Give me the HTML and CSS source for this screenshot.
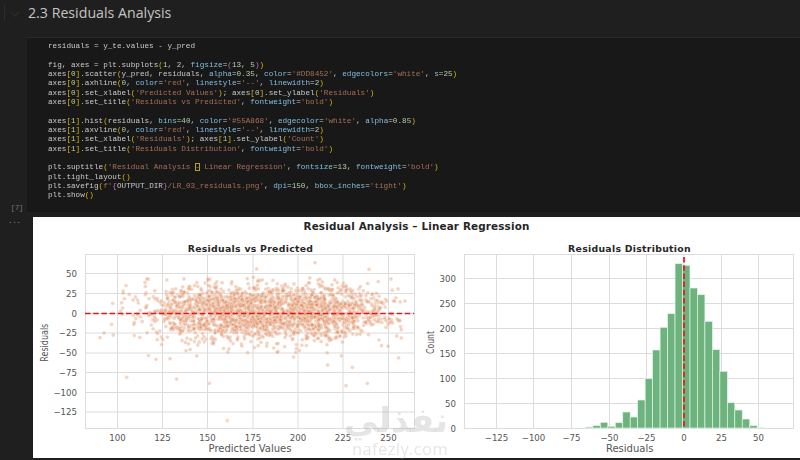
FILE: index.html
```html
<!DOCTYPE html>
<html lang="en">

<head>
    <meta charset="UTF-8">
    <meta name="viewport" content="width=device-width, initial-scale=1.0">
    <title>Residuals Analysis</title>
    <link rel="stylesheet" href="styles.css">
</head>

<body>

    <header class="section-head">
        <span class="fold-bar"></span>
        <svg class="chevron" viewBox="0 0 10 6" width="10" height="6"><path d="M1 1l4 4 4-4"></path></svg>
        <h2>2.3 Residuals Analysis</h2>
    </header>

    <div class="cell">
        <div class="gutter"><span>[7]</span></div>
        <pre class="code">residuals = y_te.values - y_pred

fig, axes = plt.subplots<b>(</b><i>1</i>, <i>2</i>, <u>figsize</u>=<em>(</em><i>13</i>, <i>5</i><em>)</em><b>)</b>
axes<b>[</b><i>0</i><b>]</b>.scatter<b>(</b>y_pred, residuals, <u>alpha</u>=<i>0.35</i>, <u>color</u>=<s>'#DD8452'</s>, <u>edgecolors</u>=<s>'white'</s>, <u>s</u>=<i>25</i><b>)</b>
axes<b>[</b><i>0</i><b>]</b>.axhline<b>(</b><i>0</i>, <u>color</u>=<s>'red'</s>, <u>linestyle</u>=<s>'--'</s>, <u>linewidth</u>=<i>2</i><b>)</b>
axes<b>[</b><i>0</i><b>]</b>.set_xlabel<b>(</b><s>'Predicted Values'</s><b>)</b>; axes<b>[</b><i>0</i><b>]</b>.set_ylabel<b>(</b><s>'Residuals'</s><b>)</b>
axes<b>[</b><i>0</i><b>]</b>.set_title<b>(</b><s>'Residuals vs Predicted'</s>, <u>fontweight</u>=<s>'bold'</s><b>)</b>

axes<b>[</b><i>1</i><b>]</b>.hist<b>(</b>residuals, <u>bins</u>=<i>40</i>, <u>color</u>=<s>'#55A868'</s>, <u>edgecolor</u>=<s>'white'</s>, <u>alpha</u>=<i>0.85</i><b>)</b>
axes<b>[</b><i>1</i><b>]</b>.axvline<b>(</b><i>0</i>, <u>color</u>=<s>'red'</s>, <u>linestyle</u>=<s>'--'</s>, <u>linewidth</u>=<i>2</i><b>)</b>
axes<b>[</b><i>1</i><b>]</b>.set_xlabel<b>(</b><s>'Residuals'</s><b>)</b>; axes<b>[</b><i>1</i><b>]</b>.set_ylabel<b>(</b><s>'Count'</s><b>)</b>
axes<b>[</b><i>1</i><b>]</b>.set_title<b>(</b><s>'Residuals Distribution'</s>, <u>fontweight</u>=<s>'bold'</s><b>)</b>

plt.suptitle<b>(</b><s>'Residual Analysis <mark>–</mark> Linear Regression'</s>, <u>fontsize</u>=<i>13</i>, <u>fontweight</u>=<s>'bold'</s><b>)</b>
plt.tight_layout<b>()</b>
plt.savefig<b>(</b><s>f'</s><em>{</em>OUTPUT_DIR<em>}</em><s>/LR_03_residuals.png'</s>, <u>dpi</u>=<i>150</i>, <u>bbox_inches</u>=<s>'tight'</s><b>)</b>
plt.show<b>()</b></pre>
    </div>

    <div class="output">
        <div class="gutter"><span>...</span></div>
        <div class="figure">
            <h3 class="suptitle">Residual Analysis – Linear Regression</h3>
            <div class="plots">
                <!-- viewBox values are page coordinates, easier to read off the plot -->
                <svg class="plot plot-left" viewBox="33 235 392 223" width="392" height="223">
                    <text class="plot-title" x="250.5" y="251.5">Residuals vs Predicted</text>
                    <g class="grid">
                        <path d="M117.5 254V428M162.5 254V428M207.5 254V428M253 254V428M298 254V428M343 254V428M388.5 254V428"></path>
                        <path d="M85 273.5H414M85 293.5H414M85 313.5H414M85 333H414M85 353H414M85 372.5H414M85 392.5H414M85 412H414"></path>
                        <rect x="85.5" y="254.5" width="329" height="174"></rect>
                    </g>
                    <g id="dots"></g>
                    <path class="zero" d="M85 313.5H414"></path>
                    <g class="ytick">
                        <text x="77" y="276.5">50</text>
                        <text x="77" y="296.5">25</text>
                        <text x="77" y="316.5">0</text>
                        <text x="77" y="336">−25</text>
                        <text x="77" y="356">−50</text>
                        <text x="77" y="375.5">−75</text>
                        <text x="77" y="395.5">−100</text>
                        <text x="77" y="415">−125</text>
                    </g>
                    <g class="xtick">
                        <text x="117.5" y="441">100</text>
                        <text x="162.5" y="441">125</text>
                        <text x="207.5" y="441">150</text>
                        <text x="253" y="441">175</text>
                        <text x="298" y="441">200</text>
                        <text x="343" y="441">225</text>
                        <text x="388.5" y="441">250</text>
                    </g>
                    <text class="xlabel" x="250" y="451.5">Predicted Values</text>
                    <text class="ylabel" transform="translate(47.5 361.7) rotate(-90)" textLength="38" lengthAdjust="spacingAndGlyphs">Residuals</text>
                </svg>
                <svg class="plot plot-right" viewBox="425 235 375 223" width="375" height="223">
                    <text class="plot-title" x="629.5" y="251.5">Residuals Distribution</text>
                    <g class="grid">
                        <path d="M496.5 254V428M533.5 254V428M571.5 254V428M609.5 254V428M646.5 254V428M684 254V428M721.5 254V428M758.5 254V428"></path>
                        <path d="M464 278.5H794M464 303.5H794M464 328.5H794M464 353.5H794M464 378.5H794M464 403.5H794"></path>
                        <rect x="464.5" y="254.5" width="329" height="174"></rect>
                    </g>
                    <g id="bars"></g>
                    <path class="zero" d="M684 257V428"></path>
                    <g class="ytick">
                        <text x="456" y="281.5">300</text>
                        <text x="456" y="306.5">250</text>
                        <text x="456" y="331.5">200</text>
                        <text x="456" y="356.5">150</text>
                        <text x="456" y="381.5">100</text>
                        <text x="456" y="406.5">50</text>
                        <text x="456" y="431.5">0</text>
                    </g>
                    <g class="xtick">
                        <text x="496.5" y="441">−125</text>
                        <text x="533.5" y="441">−100</text>
                        <text x="571.5" y="441">−75</text>
                        <text x="609.5" y="441">−50</text>
                        <text x="646.5" y="441">−25</text>
                        <text x="684" y="441">0</text>
                        <text x="721.5" y="441">25</text>
                        <text x="758.5" y="441">50</text>
                    </g>
                    <text class="xlabel" x="629.7" y="451.5">Residuals</text>
                    <text class="ylabel" transform="translate(433.5 354) rotate(-90)" textLength="23" lengthAdjust="spacingAndGlyphs">Count</text>
                </svg>
            </div>
            <div class="watermark">
                <span class="wm-ar" lang="ar" dir="rtl">نفذلي</span>
                <span class="wm-en">nafezly.com</span>
            </div>
        </div>
    </div>

    <script src="plots.js"></script>
</body>

</html>
```

FILE: styles.css
```css
body {
    margin: 0;
    width: 800px;
    height: 460px;
    overflow: hidden;
    background-color: #1f1f1f;
    font-family: "Open Sans", sans-serif;
}

.section-head {
    height: 37px;
    display: flex;
    align-items: flex-start;
    box-sizing: border-box;
    padding: 3px 0 0 4px;
}

.section-head h2 {
    margin: 0;
    font-size: 14.2px;
    line-height: 19px;
    font-weight: 400;
    color: #c4c4c4;
}

.fold-bar {
    width: 1px;
    height: 16px;
    margin-top: 2px;
    background-color: #2c2c2c;
}

.chevron {
    margin: 8px 8px 0 5px;
    fill: none;
    stroke: #2b2b2b;
    stroke-width: 1.5;
}

.cell {
    height: 175px;
    display: flex;
}

.gutter {
    width: 27px;
    flex: none;
    display: flex;
    justify-content: center;
    color: #7a7a7a;
    font-size: 7px;
    font-family: "Liberation Mono", monospace;
}

.cell .gutter {
    align-items: flex-end;
    padding: 0 0 0 7px;
    box-sizing: border-box;
}

.code {
    flex: 1;
    margin: 0;
    padding: 4px 0 0 21px;
    border-top: 1px solid #2a2a2a;
    background-color: #181818;
    color: #cacaca;
    font-family: "Liberation Mono", monospace;
    font-size: 7.67px;
    line-height: 9.33px;
    filter: blur(0.3px);
}

.code b {
    color: #d9b400;
    font-weight: 400;
}

.code em {
    color: #c26cc2;
    font-style: normal;
}

.code i {
    color: #b5cea8;
    font-style: normal;
}

.code u {
    color: #85bfe0;
    text-decoration: none;
}

.code s {
    color: #a96f57;
    text-decoration: none;
}

.code mark {
    background: none;
    color: inherit;
    outline: 1px solid #b9a020;
    outline-offset: -1px;
}

.output {
    margin-top: 5px;
    display: flex;
}

.output .gutter {
    width: 33px;
    padding: 0 4px 0 0;
    box-sizing: border-box;
    font-weight: 700;
}

.figure {
    position: relative;
    flex: 1;
    height: 241px;
    background-color: #fff;
    filter: blur(0.3px);
}

.suptitle {
    margin: 0;
    height: 18px;
    font-family: "DejaVu Sans", sans-serif;
    font-size: 10.4px;
    line-height: 18px;
    letter-spacing: 0.15px;
    font-weight: 700;
    text-align: center;
    color: #262626;
}

.plots {
    display: flex;
}

.plot {
    display: block;
    font-family: "DejaVu Sans", sans-serif;
}

.plot-title {
    font-size: 9.3px;
    font-weight: 700;
    letter-spacing: 0.3px;
    text-anchor: middle;
    fill: #262626;
}

.grid path,
.grid rect {
    fill: none;
    stroke: #dcdcdc;
    stroke-width: 1;
}

.zero {
    fill: none;
    stroke: #e8141c;
    stroke-width: 1.7;
    stroke-dasharray: 5.5 2.7;
}

.ytick text {
    font-size: 8.6px;
    text-anchor: end;
    fill: #555;
}

.xtick text {
    font-size: 8.6px;
    text-anchor: middle;
    fill: #555;
}

.xlabel {
    font-size: 10px;
    text-anchor: middle;
    fill: #555;
}

.ylabel {
    font-size: 10px;
    fill: #555;
}

.dot {
    fill: #dd8452;
    fill-opacity: 0.35;
    stroke: #fff;
    stroke-opacity: 0.45;
    stroke-width: 0.5;
}

.bar {
    fill: #6cb37e;
    stroke: #e6f2e9;
    stroke-width: 0.7;
}

.watermark {
    position: absolute;
    left: 319px;
    top: 184px;
    width: 96px;
    color: rgba(170, 170, 170, 0.3);
    pointer-events: none;
}

.wm-ar {
    display: block;
    text-align: center;
    font-family: "DejaVu Sans", sans-serif;
    font-weight: 700;
    font-size: 34px;
    line-height: 39px;
    white-space: nowrap;
}

.wm-en {
    display: block;
    text-align: center;
    font-family: "Open Sans", sans-serif;
    font-size: 16.5px;
    line-height: 17px;
    letter-spacing: 0.4px;
    white-space: nowrap;
}
```

FILE: plots.js
```js
// scatter and histogram marks, values are page pixels like the viewBox
var SVG_NS = "http://www.w3.org/2000/svg";

var seed = 73;
function rand() {
    seed = (seed + 0x6D2B79F5) | 0;
    var t = Math.imul(seed ^ (seed >>> 15), 1 | seed);
    t = (t + Math.imul(t ^ (t >>> 7), 61 | t)) ^ t;
    return ((t ^ (t >>> 14)) >>> 0) / 4294967296;
}

function gauss() {
    return Math.sqrt(-2 * Math.log(rand() + 1e-9)) * Math.cos(2 * Math.PI * rand());
}

function add(parent, name, attrs) {
    var el = document.createElementNS(SVG_NS, name);
    for (var key in attrs) {
        el.setAttribute(key, attrs[key]);
    }
    parent.appendChild(el);
}

var dots = document.getElementById("dots");

function addDot(x, y) {
    add(dots, "circle", { class: "dot", cx: x.toFixed(1), cy: y.toFixed(1), r: 1.9 });
}

for (var i = 0; i < 2400; i++) {
    var x = 268 + (rand() - 0.5) * 180 + gauss() * 30;
    var y = 312 + gauss() * 14.5;
    if (x < 118 || x > 402 || y < 276 || y > 358) {
        continue;
    }
    addDot(x, y);
}

var outliers = [
    [100, 337.7], [104, 333], [113.3, 335], [111.7, 324.3], [112.7, 303.3], [121.7, 302.7],
    [126.7, 377.3], [176.7, 379], [209.3, 383.3], [227.3, 420.5], [315, 262.7], [346, 385.7],
    [367.3, 383.3], [352.3, 367.3], [327.7, 365], [369, 269.3], [256.7, 269], [156, 359.3],
    [170, 358.7], [147, 279], [184, 279], [208, 279], [398, 289], [405, 301], [398, 320]
];
outliers.forEach(function (p) {
    addDot(p[0], p[1]);
});

var bars = document.getElementById("bars");
var heights = [1, 2.3, 5.7, 1.7, 5.3, 16, 11, 28, 49.3, 78, 100.7, 114.3, 164.3, 162.7,
    140, 133.3, 106.7, 78.3, 56.7, 25.3, 18, 9, 2.3, 0.7];

heights.forEach(function (h, n) {
    add(bars, "rect", {
        class: "bar",
        x: (585.4 + n * 7.47).toFixed(2),
        y: (428 - h).toFixed(1),
        width: 7.47,
        height: h
    });
});
```
